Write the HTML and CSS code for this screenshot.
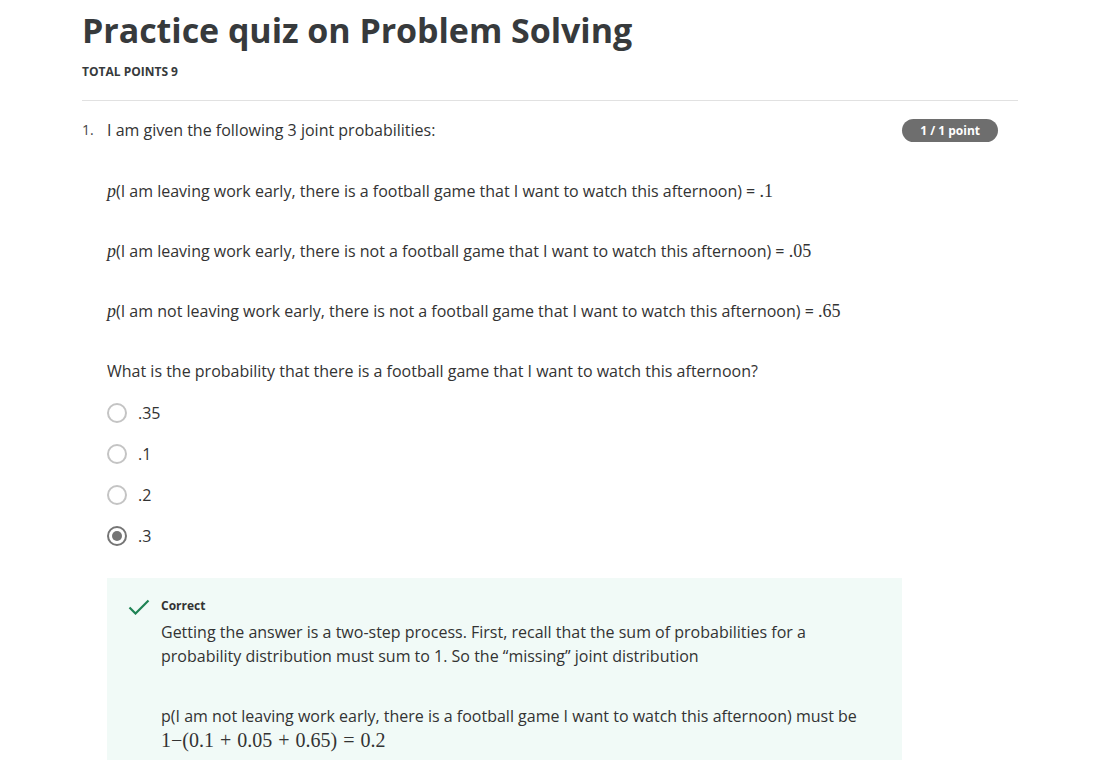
FILE: index.html
```html
<!DOCTYPE html>
<html lang="en">
<head>
<meta charset="utf-8">
<link rel="stylesheet" href="styles.css">
</head>
<body>
<div class="page">
  <h1 class="title">Practice quiz on Problem Solving</h1>
  <div class="total">TOTAL POINTS 9</div>
  <hr class="rule">
  <div class="question">
    <div class="qnum">1.</div>
    <div class="qbody">
      <div class="qhead">
        <div class="qtext">I am given the following 3 joint probabilities:</div>
        <div class="badge">1 / 1 point</div>
      </div>
      <p class="prob first"><span class="mi">p</span>(I am leaving work early, there is a football game that I want to watch this afternoon) = <span class="mn">.1</span></p>
      <p class="prob"><span class="mi">p</span>(I am leaving work early, there is not a football game that I want to watch this afternoon) = <span class="mn">.05</span></p>
      <p class="prob"><span class="mi">p</span>(I am not leaving work early, there is not a football game that I want to watch this afternoon) = <span class="mn">.65</span></p>
      <p class="prob">What is the probability that there is a football game that I want to watch this afternoon?</p>
      <div class="options">
        <div class="opt"><span class="radio"></span><span>.35</span></div>
        <div class="opt"><span class="radio"></span><span>.1</span></div>
        <div class="opt"><span class="radio"></span><span>.2</span></div>
        <div class="opt"><span class="radio checked"></span><span>.3</span></div>
      </div>
      <div class="feedback">
        <svg class="check" width="22" height="16" viewBox="0 0 22 16"><path d="M1.5 8.5 L7.5 14.5 L20.5 1.5" fill="none" stroke="#1f8354" stroke-width="2.2"/></svg>
        <div class="fbody">
          <div class="fhead">Correct</div>
          <p class="ftext">Getting the answer is a two-step process. First, recall that the sum of probabilities for a probability distribution must sum to 1. So the “missing” joint distribution</p>
          <p class="ftext narrow">p(I am not leaving work early, there is a football game I want to watch this afternoon) must be<br><span class="math">1−(0.1 + 0.05 + 0.65) = 0.2</span></p>
        </div>
      </div>
    </div>
  </div>
</div>
</body>
</html>
```
FILE: styles.css
```css
html, body { margin: 0; padding: 0; background: #fff; }
body { font-family: "Open Sans", "Liberation Sans", sans-serif; color: #333; }
.page { padding-left: 82px; width: 936px; }
.title { margin: 0; padding-top: 8px; font-size: 34px; font-weight: 700; line-height: 44px; color: #373a3c; letter-spacing: -0.05px; }
.total { margin-top: 12px; font-size: 12px; font-weight: 700; line-height: 16px; color: #373a3c; }
.rule { margin: 20px 0 0 0; border: 0; border-top: 1px solid #e1e1e1; height: 0; }
.question { display: flex; padding-top: 17px; }
.qnum { width: 25px; font-size: 14px; line-height: 24px; color: #444; }
.qbody { flex: 1; }
.qhead { display: flex; justify-content: space-between; align-items: flex-start; padding-right: 20px; }
.qtext { font-size: 16px; line-height: 24px; color: #333; }
.badge { margin-top: 1px; background: #6e6e6e; color: #fff; font-size: 12px; font-weight: 700; line-height: 23px; height: 23px; padding: 0 18px; border-radius: 12px; }
.prob { margin: 36px 0 0 0; font-size: 16px; line-height: 24px; color: #333; }
.prob.first { margin-top: 37px; }
.mi { font-family: "Liberation Serif", "DejaVu Serif", serif; font-style: italic; font-size: 18px; }
.mn { font-family: "Liberation Serif", "DejaVu Serif", serif; font-size: 18px; }
.options { margin-top: 18px; display: flex; flex-direction: column; gap: 17px; }
.opt { display: flex; align-items: center; gap: 11px; font-size: 16px; line-height: 24px; color: #333; }
.radio { width: 16px; height: 16px; border: 2px solid #c4c4c4; border-radius: 50%; box-sizing: content-box; position: relative; }
.radio.checked { border-color: #757575; }
.radio.checked::after { content: ""; position: absolute; left: 3px; top: 3px; width: 10px; height: 10px; border-radius: 50%; background: #757575; }
.feedback { margin-top: 30px; width: 795px; background: #f1faf7; display: flex; padding: 21px 0 10px 21px; box-sizing: border-box; }
.check { flex: none; }
.fbody { margin-left: 11px; width: 700px; }
.fhead { font-size: 12px; font-weight: 700; line-height: 16px; color: #333; margin-top: -1px; }
.ftext { margin: 6px 0 0 0; font-size: 16px; line-height: 24px; color: #333; }
.ftext.narrow { margin-top: 36px; }
.math { font-family: "Liberation Serif", "DejaVu Serif", serif; font-size: 20px; word-spacing: 1px; }
```
